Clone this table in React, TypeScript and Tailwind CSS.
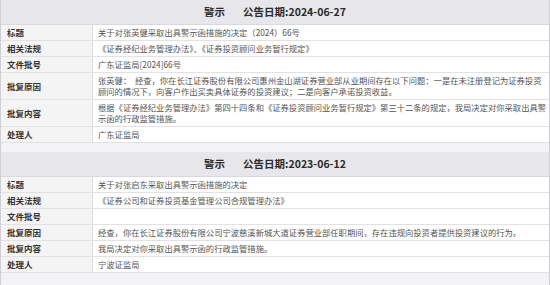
import React from 'react';

type Row = { label: string; lines: string[] };

type Notice = { kind: string; date: string; rows: Row[] };

const NOTICES: Notice[] = [
  {
    kind: '警示',
    date: '2024-06-27',
    rows: [
      { label: '标题', lines: ['关于对张英健采取出具警示函措施的决定（2024）66号'] },
      { label: '相关法规', lines: ['《证券经纪业务管理办法》、《证券投资顾问业务暂行规定》'] },
      { label: '文件批号', lines: ['广东证监局[2024]66号'] },
      {
        label: '批复原因',
        lines: [
          '张英健：  经查，你在长江证券股份有限公司惠州金山湖证券营业部从业期间存在以下问题：一是在未注册登记为证券投资',
          '顾问的情况下，向客户作出买卖具体证券的投资建议；二是向客户承诺投资收益。',
        ],
      },
      {
        label: '批复内容',
        lines: [
          '根据《证券经纪业务管理办法》第四十四条和《证券投资顾问业务暂行规定》第三十二条的规定，我局决定对你采取出具警',
          '示函的行政监管措施。',
        ],
      },
      { label: '处理人', lines: ['广东证监局'] },
    ],
  },
  {
    kind: '警示',
    date: '2023-06-12',
    rows: [
      { label: '标题', lines: ['关于对张启东采取出具警示函措施的决定'] },
      { label: '相关法规', lines: ['《证券公司和证券投资基金管理公司合规管理办法》'] },
      { label: '文件批号', lines: [''] },
      {
        label: '批复原因',
        lines: ['经查，你在长江证券股份有限公司宁波慈溪新城大道证券营业部任职期间，存在违规向投资者提供投资建议的行为。'],
      },
      { label: '批复内容', lines: ['我局决定对你采取出具警示函的行政监管措施。'] },
      { label: '处理人', lines: ['宁波证监局'] },
    ],
  },
];

function NoticeTable({ notice }: { notice: Notice }) {
  return (
    <div>
      <div className="flex h-[25px] items-center justify-center gap-[18px] border-b border-[#d8d8de] bg-[#e7e7eb] text-[10.5px] font-bold text-[#2a2a2a]">
        <span>{notice.kind}</span>
        <span>公告日期:{notice.date}</span>
      </div>
      {notice.rows.map((row) => (
        <div key={row.label} className="flex border-b border-[#e2e2e4]">
          <div className="flex w-[92px] shrink-0 items-center border-r border-[#dcdcdf] bg-[#f4f4f5] pl-[6px] text-[8.5px] font-bold text-[#333]">
            {row.label}
          </div>
          <div className="min-h-[15px] flex-1 bg-white py-[2px] pl-[5px] text-[8.3px] leading-[11px] text-[#555]">
            {row.lines.map((line, i) => (
              <div key={i} className="whitespace-pre">
                {line}
              </div>
            ))}
          </div>
        </div>
      ))}
    </div>
  );
}

export default function App() {
  return (
    <div className="h-[285px] w-[550px] overflow-hidden bg-[#f3f3f5] font-['Noto_Sans_CJK_SC',sans-serif]">
      <div className="flex h-full flex-col gap-[9px] border-x border-[#d0d0d4]">
        {NOTICES.map((n) => (
          <NoticeTable key={n.date} notice={n} />
        ))}
      </div>
    </div>
  );
}
